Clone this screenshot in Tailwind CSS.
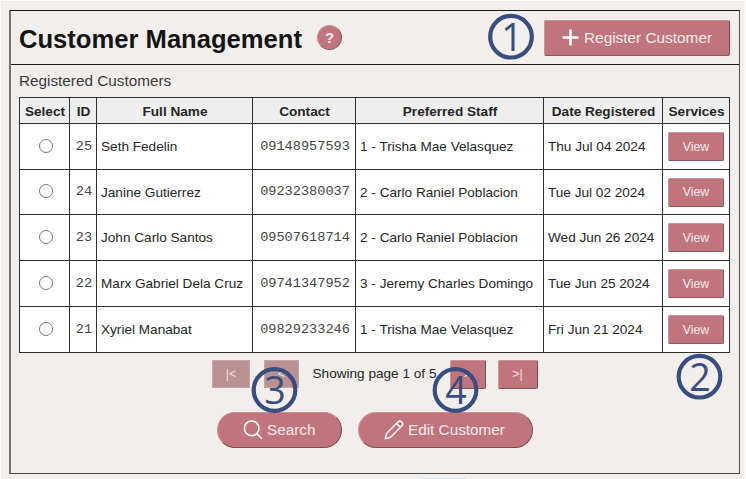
<!DOCTYPE html>
<html lang="en">
<head>
<meta charset="utf-8">
<title>Customer Management</title>
<script src="https://cdn.jsdelivr.net/npm/@tailwindcss/browser@4"></script>
</head>
<body class="relative w-[746px] h-[479px] overflow-hidden bg-white pl-px pt-px pr-px text-[#262626] font-['Liberation_Sans',Arial,sans-serif]">
<div class="h-[478px] bg-[#f2eeeb] pl-[8px] pt-[9px]">
  <main class="w-[731px] h-[464px] border border-[#1c1c1c] border-l-2 border-l-[#777472] border-r-[#55524f] border-b-[#4a4846]">
    <header class="flex items-center h-[54px] pl-[8px] pr-[9px] border-b border-[#1c1c1c]">
      <h1 class="text-[25.6px] leading-[30px] font-bold text-[#151515] whitespace-nowrap mt-[3px]">Customer Management</h1>
      <button class="ml-[15px] size-[25px] rounded-full bg-[#c0757d] border border-[#cc9197] border-r-[#8f555c] border-b-[#8f555c] text-[#f5e8e8] text-[15px] leading-none font-bold">?</button>
      <button class="ml-auto flex items-center w-[186px] h-[36px] pl-[17px] rounded-[2px] bg-[#c0757d] border border-[#cc9197] border-r-[#7f4a50] border-b-[#8f555c] text-[#f6e9e9] text-[15.36px] whitespace-nowrap">
        <svg class="size-[17px] mr-[5px]" viewBox="0 0 17 17" fill="none" stroke="#fff" stroke-width="2.6"><path d="M8.5 .5v16M.5 8.5h16"/></svg>Register Customer
      </button>
    </header>
    <section class="pl-[8px]">
      <h2 class="h-[32px] pt-[7px] text-[15.3px] leading-[18px] text-[#3a3a3a]">Registered Customers</h2>
      <div class="grid w-[711px] grid-cols-[49px_26px_155px_102px_187px_118px_66px] grid-rows-[25px_45px_44px_45px_45px_45px] gap-px p-px bg-[#303030] text-[13.6px] leading-[16px] whitespace-nowrap [&>*]:flex [&>*]:items-center [&>*]:bg-white [&>b]:justify-center [&>b]:bg-[#eeeeee] [&>b]:pt-[2px] [&>b]:pl-px [&>p]:pl-[4px] [&>p]:pt-px [&>code]:justify-center [&>code]:pl-[2px] [&>code]:font-['Liberation_Mono',monospace] [&>code]:text-[#444444] [&>div]:justify-center">
        <b>Select</b><b>ID</b><b>Full Name</b><b>Contact</b><b>Preferred Staff</b><b>Date Registered</b><b>Services</b>

        <div><i class="size-[14px] rounded-full border border-[#777] ml-[2px] mb-[2px]"></i></div><code>25</code><p>Seth Fedelin</p><code>09148957593</code><p>1 - Trisha Mae Velasquez</p><p>Thu Jul 04 2024</p>
        <div><button class="w-[56px] h-[29px] rounded-[2px] bg-[#c0757d] border border-[#cc9197] border-r-[#8f555c] border-b-[#8f555c] text-[#f5e8e8] text-[12.3px]">View</button></div>

        <div><i class="size-[14px] rounded-full border border-[#777] ml-[2px] mb-[2px]"></i></div><code>24</code><p>Janine Gutierrez</p><code>09232380037</code><p>2 - Carlo Raniel Poblacion</p><p>Tue Jul 02 2024</p>
        <div><button class="w-[56px] h-[29px] rounded-[2px] bg-[#c0757d] border border-[#cc9197] border-r-[#8f555c] border-b-[#8f555c] text-[#f5e8e8] text-[12.3px]">View</button></div>

        <div><i class="size-[14px] rounded-full border border-[#777] ml-[2px] mb-[2px]"></i></div><code>23</code><p>John Carlo Santos</p><code>09507618714</code><p>2 - Carlo Raniel Poblacion</p><p>Wed Jun 26 2024</p>
        <div><button class="w-[56px] h-[29px] rounded-[2px] bg-[#c0757d] border border-[#cc9197] border-r-[#8f555c] border-b-[#8f555c] text-[#f5e8e8] text-[12.3px]">View</button></div>

        <div><i class="size-[14px] rounded-full border border-[#777] ml-[2px] mb-[2px]"></i></div><code>22</code><p>Marx Gabriel Dela Cruz</p><code>09741347952</code><p>3 - Jeremy Charles Domingo</p><p>Tue Jun 25 2024</p>
        <div><button class="w-[56px] h-[29px] rounded-[2px] bg-[#c0757d] border border-[#cc9197] border-r-[#8f555c] border-b-[#8f555c] text-[#f5e8e8] text-[12.3px]">View</button></div>

        <div><i class="size-[14px] rounded-full border border-[#777] ml-[2px] mb-[2px]"></i></div><code>21</code><p>Xyriel Manabat</p><code>09829233246</code><p>1 - Trisha Mae Velasquez</p><p>Fri Jun 21 2024</p>
        <div><button class="w-[56px] h-[29px] rounded-[2px] bg-[#c0757d] border border-[#cc9197] border-r-[#8f555c] border-b-[#8f555c] text-[#f5e8e8] text-[12.3px]">View</button></div>
      </div>
      <nav class="flex items-center mt-[6px] h-[30px] pl-[193px] text-[12.3px] text-[#f0e2e2] whitespace-nowrap">
        <button class="w-[38px] h-[28px] bg-[#b99190] border border-[#c6a5a4]">|&lt;</button>
        <button class="ml-[14px] w-[35px] h-[28px] bg-[#b99190] border border-[#c6a5a4]">&lt;</button>
        <span class="ml-[13.5px] w-[137px] text-[13.6px] text-[#262626]">Showing page 1 of 5</span>
        <button class="w-[36px] h-[29px] rounded-[2px] bg-[#c0757d] border border-[#cc9197] border-r-[#7f4a50] border-b-[#8f555c]">&gt;</button>
        <button class="ml-[12px] w-[40px] h-[29px] rounded-[2px] bg-[#c0757d] border border-[#cc9197] border-r-[#7f4a50] border-b-[#8f555c]">&gt;|</button>
      </nav>
      <div class="flex gap-[16px] mt-[23px] pl-[198px] text-[15.3px] text-[#f6e9e9] whitespace-nowrap">
        <button class="flex items-center w-[125px] h-[36px] pl-[25px] rounded-full bg-[#c0757d] border border-[#cc9197] border-r-[#7f4a50] border-b-[#7f4a50]">
          <svg class="size-[20px] mr-[4px]" viewBox="0 0 20 20" fill="none" stroke="#fff" stroke-width="1.6"><circle cx="8.7" cy="8.3" r="7.3"/><path d="M13.8 13.6L19 18.8"/></svg>Search
        </button>
        <button class="flex items-center w-[175px] h-[36px] pl-[25px] rounded-full bg-[#c0757d] border border-[#cc9197] border-r-[#7f4a50] border-b-[#7f4a50]">
          <svg class="size-[20px] mr-[4px]" viewBox="0 0 20 20" fill="none" stroke="#fff" stroke-width="1.5" stroke-linejoin="round"><path d="M1.2 18.8L2.7 13.2L14 2C15.3 .7 16.6 .8 17.8 2C19.1 3.2 19.1 4.6 17.9 5.8L6.7 17.2ZM12.5 3.5L16.4 7.3"/></svg>Edit Customer
        </button>
      </div>
    </section>
  </main>
</div>
<div class="absolute left-[420px] top-[478px] w-[46px] h-px bg-[#dfe2e5]"></div>
<svg class="absolute inset-0 font-['Open_Sans','Noto_Sans',sans-serif] font-normal text-[37.5px]" width="746" height="479" viewBox="0 0 746 479">
  <g fill="none" stroke="#384d80" stroke-width="4.2"><circle cx="511" cy="36.7" r="20.8"/><circle cx="699.5" cy="376.7" r="20.8"/><circle cx="274.5" cy="390" r="20.8"/><circle cx="455.5" cy="390" r="20.8"/></g>
  <g fill="#384d80" text-anchor="middle"><text x="512" y="51">1</text><text x="700" y="391">2</text><text x="275" y="403.7">3</text><text x="456" y="403.7">4</text></g>
</svg>
</body>
</html>
